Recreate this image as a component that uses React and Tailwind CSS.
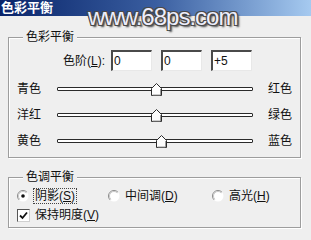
import React from "react";

const Thumb = ({ left }) => (
  <svg
    width="11"
    height="13"
    viewBox="0 0 11 13"
    className="absolute top-[-5px]"
    style={{ left }}
  >
    <path d="M5.5 0.5 L10.5 5.5 L10.5 12.5 L0.5 12.5 L0.5 5.5 Z" fill="#fdfdfd" stroke="#2a2a2a" />
    <path d="M1.5 12 L9.5 12 L9.5 6" fill="none" stroke="#9a9a9a" />
  </svg>
);

const SliderRow = ({ left, right, pos }) => (
  <div className="flex items-center h-[26px]">
    <span className="ml-[8px] w-[40px]">{left}</span>
    <div className="relative w-[196px] h-[4px] border border-[#2a2a2a] bg-white rounded-[1px]">
      <Thumb left={pos} />
    </div>
    <span className="ml-[15px]">{right}</span>
  </div>
);

const Radio = ({ checked }) => (
  <svg width="12" height="12" viewBox="0 0 12 12" className="shrink-0">
    <circle cx="6" cy="6" r="5.5" fill="#fff" />
    <path d="M2.1 9.9 A5.5 5.5 0 0 1 9.9 2.1" fill="none" stroke="#8a8a8a" strokeWidth="1" />
    <path d="M2.8 9.2 A4.5 4.5 0 0 1 9.2 2.8" fill="none" stroke="#c8c8c8" strokeWidth="1" />
    {checked && <circle cx="6" cy="6" r="1.8" fill="#111" />}
  </svg>
);

const Key = ({ children }) => <span className="underline underline-offset-1">{children}</span>;

const NumBox = ({ value, first }) => (
  <div
    className={`${first ? "ml-[6px]" : "ml-[9px]"} w-[41px] h-[21px] bg-white border-t-2 border-l-2 border-t-[#4a4a4a] border-l-[#4a4a4a] border-r border-b border-r-[#e8e8e8] border-b-[#e8e8e8] pl-[1px] leading-[18px]`}
  >
    {value}
  </div>
);

export default function App() {
  return (
    <div className="relative w-[311px] h-[240px] overflow-hidden bg-[#efefef] text-[12px] leading-[16px] text-[#111] font-['Liberation_Sans','Noto_Sans_CJK_SC',sans-serif]">
      <div className="h-[16px] bg-linear-to-r from-[#0a246a] via-[#3a5ea0] to-[#a6caf0] pl-[1px] text-white font-bold text-[13px] leading-[16px]">
        色彩平衡
      </div>

      <span className="absolute left-[88px] top-[5px] text-[24px] leading-[24px] tracking-[-1px] text-[#eeeefb] font-['Liberation_Sans',sans-serif] [text-shadow:1px_1px_0_#4a4a4a,-1px_-1px_0_#4a4a4a,1px_-1px_0_#4a4a4a,-1px_1px_0_#4a4a4a,2px_2px_2px_#333]">
        www.68ps.com
      </span>

      <fieldset className="ml-[8px] mt-[13px] w-[293px] border border-[#9d9d9d] pb-[3px] shadow-[inset_1px_1px_0_#fff,1px_1px_0_#fff]">
        <legend className="ml-[14px] px-[3px] bg-[#efefef] leading-[16px]">色彩平衡</legend>
        <div className="flex items-center h-[21px] mt-[5px]">
          <span className="w-[96px] text-right">
            色阶(<Key>L</Key>):
          </span>
          <NumBox value="0" first />
          <NumBox value="0" />
          <NumBox value="+5" />
        </div>
        <div className="mt-[5px]">
          <SliderRow left="青色" right="红色" pos="93px" />
          <SliderRow left="洋红" right="绿色" pos="93px" />
          <SliderRow left="黄色" right="蓝色" pos="98px" />
        </div>
      </fieldset>

      <fieldset className="ml-[8px] mt-[11px] w-[293px] border border-[#9d9d9d] pb-[3px] shadow-[inset_1px_1px_0_#fff,1px_1px_0_#fff]">
        <legend className="ml-[14px] px-[3px] bg-[#efefef] leading-[16px]">色调平衡</legend>
        <div className="flex items-center h-[18px] mt-[2px]">
          <div className="flex items-center w-[91px] ml-[8px]">
            <Radio checked />
            <span className="ml-[4px] px-[1px] border border-dotted border-[#444] leading-[14px]">
              阴影(<Key>S</Key>)
            </span>
          </div>
          <div className="flex items-center w-[104px]">
            <Radio />
            <span className="ml-[5px]">
              中间调(<Key>D</Key>)
            </span>
          </div>
          <div className="flex items-center">
            <Radio />
            <span className="ml-[5px]">
              高光(<Key>H</Key>)
            </span>
          </div>
        </div>
        <div className="flex items-center h-[19px] pt-[1px]">
          <div className="ml-[8px] w-[13px] h-[13px] bg-white border border-t-[#555] border-l-[#555] border-r-[#cfcfcf] border-b-[#cfcfcf] flex items-center justify-center">
            <svg width="9" height="9" viewBox="0 0 9 9">
              <path d="M1 4.5 L3.5 7 L8 1.5" fill="none" stroke="#111" strokeWidth="1.8" />
            </svg>
          </div>
          <span className="ml-[5px]">
            保持明度(<Key>V</Key>)
          </span>
        </div>
      </fieldset>
    </div>
  );
}
